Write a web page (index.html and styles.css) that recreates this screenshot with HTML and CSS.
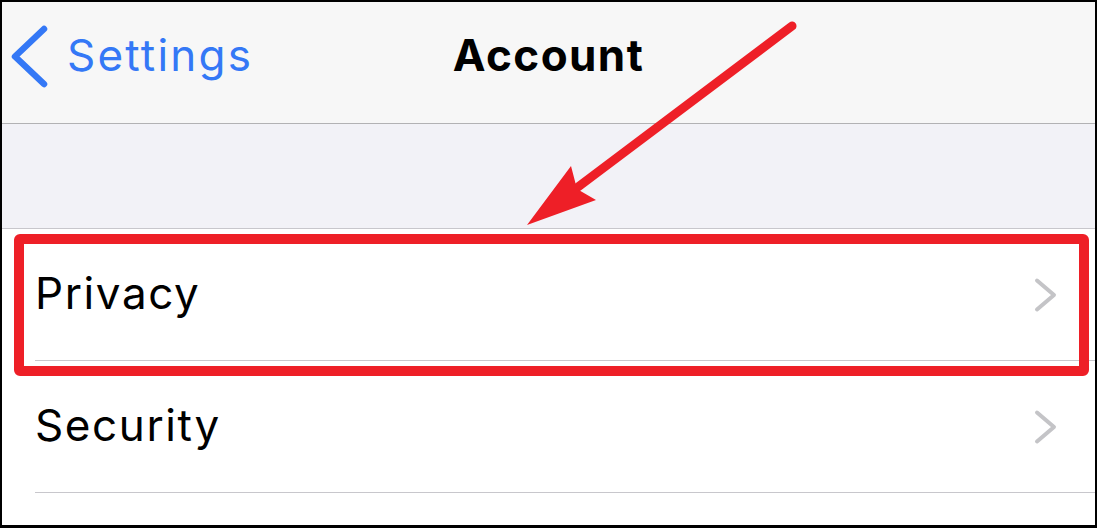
FILE: index.html
```html
<!DOCTYPE html>
<html lang="en">
<head>
<meta charset="utf-8">
<title>Account</title>
<link rel="stylesheet" href="styles.css">
</head>
<body>
<div class="screen">
  <header class="navbar">
    <div class="nav-left">
      <svg class="back-chevron" width="40" height="65" viewBox="0 0 40 65" aria-hidden="true">
        <polyline points="34,5 5,32.5 34,60" fill="none" stroke="#3478f6" stroke-width="6.5" stroke-linecap="round" stroke-linejoin="round"/>
      </svg>
      <span class="back-label">Settings</span>
    </div>
    <h1 class="nav-title">Account</h1>
    <div class="nav-right"></div>
  </header>
  <div class="section-gap"></div>
  <ul class="list">
    <li class="row">
      <div class="row-inner">
        <span class="row-label">Privacy</span>
        <svg class="chevron" width="24" height="38" viewBox="0 0 24 38" aria-hidden="true">
          <polyline points="4,4.5 21,19 4,33.5" fill="none" stroke="#c4c4c7" stroke-width="4" stroke-linecap="round" stroke-linejoin="round"/>
        </svg>
      </div>
    </li>
    <li class="row">
      <div class="row-inner">
        <span class="row-label">Security</span>
        <svg class="chevron" width="24" height="38" viewBox="0 0 24 38" aria-hidden="true">
          <polyline points="4,4.5 21,19 4,33.5" fill="none" stroke="#c4c4c7" stroke-width="4" stroke-linecap="round" stroke-linejoin="round"/>
        </svg>
      </div>
    </li>
  </ul>
</div>
<div class="highlight-box"></div>
<svg class="annotation" width="1097" height="528" viewBox="0 0 1097 528" aria-hidden="true">
  <line x1="792" y1="26" x2="578" y2="187" stroke="#ee1f27" stroke-width="9" stroke-linecap="round"/>
  <polygon points="527,225 571,166 577,189 596,200" fill="#ee1f27"/>
</svg>
</body>
</html>
```
FILE: styles.css
```css
* { box-sizing: border-box; }

html, body {
  margin: 0;
  padding: 0;
}

body {
  position: relative;
  width: 1097px;
  height: 528px;
  overflow: hidden;
  background: #ffffff;
  font-family: Inter, "Noto Sans", "Liberation Sans", sans-serif;
}

.screen {
  width: 1097px;
  height: 528px;
  border: 2px solid #000;
  border-bottom-width: 3px;
  background: #ffffff;
  display: flex;
  flex-direction: column;
}

.navbar {
  height: 122px;
  flex: 0 0 auto;
  background: #f7f7f7;
  border-bottom: 1px solid #b2b2b4;
  padding-bottom: 13px;
  display: grid;
  grid-template-columns: 1fr auto 1fr;
  align-items: center;
}

.nav-left {
  display: flex;
  align-items: center;
  padding-left: 8px;
}

.back-chevron {
  display: block;
  flex: 0 0 auto;
}

.back-label {
  margin-left: 17px;
  font-size: 44px;
  line-height: 1.21;
  color: #3478f6;
  font-weight: 400;
  letter-spacing: 2.2px;
}

.nav-title {
  margin: 0;
  font-size: 44px;
  line-height: 1.21;
  font-weight: 700;
  color: #000;
  letter-spacing: 1.4px;
}

.section-gap {
  height: 105px;
  flex: 0 0 auto;
  background: #f2f2f7;
  border-bottom: 1px solid #c8c7cc;
}

.list {
  list-style: none;
  margin: 0;
  padding: 0;
  background: #fff;
}

.row {
  padding-left: 33px;
}

.row-inner {
  height: 132px;
  border-bottom: 1px solid #c8c7cc;
  display: flex;
  align-items: center;
  justify-content: space-between;
  padding-right: 38px;
}

.row-label {
  font-size: 44px;
  line-height: 1.21;
  color: #000;
  letter-spacing: 1.6px;
  margin-bottom: 2px;
}

.chevron {
  display: block;
  flex: 0 0 auto;
}

.highlight-box {
  position: absolute;
  left: 14px;
  top: 234px;
  width: 1075px;
  height: 142px;
  border: 10px solid #ee1f27;
  border-radius: 6px;
  pointer-events: none;
}

.annotation {
  position: absolute;
  left: 0;
  top: 0;
  pointer-events: none;
}
```
